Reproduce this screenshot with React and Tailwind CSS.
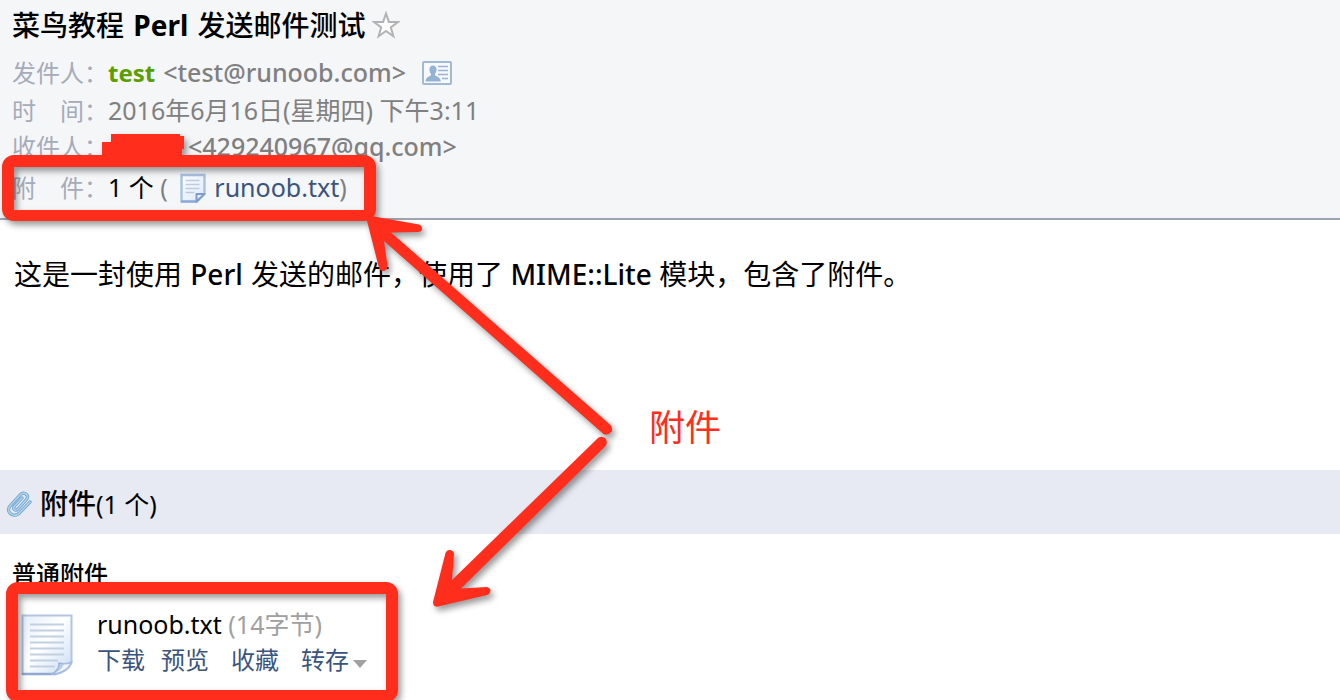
import React from "react";

function StarIcon() {
  return (
    <svg viewBox="0 0 28 28" className="size-7" aria-hidden="true">
      <path
        d="M14 2.500 16.900 10.900 26 11 18.800 16.400 21.400 25.200 14 20 6.600 25.200 9.200 16.400 2 11 11.100 10.900Z"
        fill="#fdfdfd"
        stroke="#b3b3b3"
        strokeWidth="2"
      />
    </svg>
  );
}

function CardIcon() {
  return (
    <svg viewBox="0 0 30 24" className="h-6 w-[30px]" aria-hidden="true">
      <rect x="1" y="1" width="28" height="22" rx="1" fill="#f6fafe" stroke="#a3b9d3" strokeWidth="2" />
      <path
        d="M11 4.500c2.300 0 3.700 1.700 3.600 4-.1 1.900-.8 3.300-1.600 4.200v1.600c.6.900 5.800 1.600 5.800 6.200H3.500c0-4.600 4.900-5.300 5.500-6.200v-1.600c-.9-.9-1.500-2.300-1.600-4.200-.1-2.300 1.300-4 3.600-4Z"
        fill="#94b3d4"
      />
      <path d="M16 5.500h10M16 9.500h10M16 13.500h10M20 17.500h6" stroke="#9db4cf" strokeWidth="1.600" />
    </svg>
  );
}

function SmallFileIcon() {
  return (
    <svg viewBox="0 0 26 30" className="ml-1.5 h-[30px] w-[26px]" aria-hidden="true">
      <defs>
        <linearGradient id="smallPage" x1="0" y1="0" x2="1" y2="1">
          <stop offset="0" stopColor="#ffffff" />
          <stop offset="1" stopColor="#dbe7f9" />
        </linearGradient>
      </defs>
      <path d="M1.500 2h23v18.500L17 28.500H1.500Z" fill="url(#smallPage)" stroke="#a9bfe4" strokeWidth="2.400" />
      <path d="M1 28.500h16" fill="none" stroke="#8ba6d4" strokeWidth="2" />
      <path d="M16.500 28.500V21h8Z" fill="#e8f0fc" stroke="#7f9cce" strokeWidth="2" strokeLinejoin="round" />
      <path d="M5.500 7.500h14M5.500 11.500h14M5.500 15.500h14M5.500 19.500h9" stroke="#bccbe4" strokeWidth="1.600" />
    </svg>
  );
}

function LargeFileIcon() {
  return (
    <svg viewBox="0 0 52 62" className="mt-2 h-[62px] w-[52px] shrink-0" aria-hidden="true">
      <defs>
        <linearGradient id="largePage" x1="0" y1="0" x2="1" y2="1">
          <stop offset="0" stopColor="#e4eefb" />
          <stop offset="0.45" stopColor="#ffffff" />
          <stop offset="1" stopColor="#c9dcf5" />
        </linearGradient>
      </defs>
      <path d="M1.500 1.500h49V49c-3 6-9 10-16 11h-33Z" fill="url(#largePage)" stroke="#b4c5e2" strokeWidth="2" />
      <path d="M1 60h34" stroke="#8fa9d3" strokeWidth="2.400" />
      <path d="M30 60c6-2 8-6 8-11 4 1 9 1 12.500-1-2 6-9 12-20.500 12Z" fill="#f1f6fd" stroke="#a6bcdf" strokeWidth="1.500" />
      <path d="M31 59.500c5-2 7-6 7-10.500l5 1c-2 5-6 8.500-12 9.500Z" fill="#86a4d4" opacity=".5" />
      <path
        d="M9 10.500h34M9 16.500h34M9 22.500h34M9 28.500h34M9 34.500h34M9 40.500h34M9 46.500h28M9 52.500h25"
        stroke="#c3d0df"
        strokeWidth="2"
      />
    </svg>
  );
}

function ClipIcon() {
  const d =
    "M24 13 13 24.500C7.500 29 -1 23 4 17L14.500 5.500C18.500 2 23.500 6.500 20.500 10.500L12 20C9.500 22.500 6 20 8.500 17L16 9";
  return (
    <svg viewBox="0 0 26 30" className="h-[30px] w-[26px]" aria-hidden="true">
      <g fill="none" strokeLinecap="round" strokeLinejoin="round">
        <path d={d} stroke="#6a9cc8" strokeWidth="3.200" />
        <path d={d} stroke="#aed3f1" strokeWidth="1.700" />
      </g>
    </svg>
  );
}

function Annotations() {
  return (
    <svg
      viewBox="0 0 740 704"
      className="pointer-events-none absolute left-0 top-0 h-[704px] w-[740px] drop-shadow-[3px_4px_3px_rgba(0,0,0,0.4)]"
      aria-hidden="true"
    >
      <g fill="#ff2d1c">
        <path d="M111 134H180V136H184V149H182V160H102V142H111Z" />
        <path
          fillRule="evenodd"
          d="M14 155H364a12 12 0 0 1 12 12V209a12 12 0 0 1-12 12H14a12 12 0 0 1-12-12V167a12 12 0 0 1 12-12ZM14 167V210H364V167Z"
        />
        <path
          fillRule="evenodd"
          d="M18 582H386a12 12 0 0 1 12 12V690a12 12 0 0 1-12 12H18a12 12 0 0 1-12-12V594a12 12 0 0 1 12-12ZM18 594V690H386V594Z"
        />
        <path d="M366 217Q368 215 371 216L419 224.500Q422 226 422 229Q421.500 232 418 232L391 232.500L610.500 425Q613 428 611.500 431.500Q608 436 603.500 434L384 241L387.500 266Q387.500 270 384 271Q380.500 271.500 379 268Z" />
        <path d="M598 438Q602 435.500 605.500 438.500Q608 442 605.500 446L461 588.500L487 587Q490.500 588 490.500 591Q490 594 487 595L438 606.500Q433 607.500 433 602L445.500 553Q447 549.500 450.500 550Q454 551 454 554L452 580Z" />
      </g>
    </svg>
  );
}

function MetaRow({ label, children, className = "" }) {
  return (
    <div className={`flex items-center ${className}`}>
      <dt className="w-24 shrink-0 whitespace-pre text-[#a5abb8]">{label}</dt>
      <dd className="flex items-center whitespace-pre text-[25px] text-[#808080]">{children}</dd>
    </div>
  );
}

export default function App() {
  return (
    <main className="relative min-h-screen overflow-hidden bg-white font-['Noto_Sans','Noto_Sans_CJK_SC',sans-serif] text-2xl text-black">
      <header className="border-b-2 border-[#9ea4b0] bg-[#f5f6f8] px-3 pb-[11px] pt-[3px]">
        <div className="flex h-11 items-center gap-1.5">
          <h1 className="whitespace-nowrap text-[28px] font-medium leading-10">
            菜鸟教程 <span className="px-0.5 font-bold">Perl</span> 发送邮件测试
          </h1>
          <button type="button" aria-label="星标">
            <StarIcon />
          </button>
        </div>
        <dl className="pt-0.5">
          <MetaRow label="发件人：" className="h-12">
            <span className="text-2xl font-bold text-[#5a9e00]">test</span>
            <span className="pl-2 font-medium">&lt;test@runoob.com&gt;</span>
            <button type="button" aria-label="联系人" className="ml-4">
              <CardIcon />
            </button>
          </MetaRow>
          <MetaRow label="时　间：" className="h-7">
            2016年6月16日(星期四) 下午3:11
          </MetaRow>
          <MetaRow label="收件人：" className="h-11">
            <span className="pl-20 font-medium">&lt;429240967@qq.com&gt;</span>
          </MetaRow>
          <MetaRow label="附　件：" className="h-[38px]">
            <span className="text-black">1 个</span>
            <span> ( </span>
            <SmallFileIcon />
            <a href="#attachments" className="ml-2 text-[#3a5480]">
              runoob.txt
            </a>
            <span>)</span>
          </MetaRow>
        </dl>
      </header>

      <section className="flex h-[250px] flex-col justify-between px-3.5 pb-4 pt-8">
        <p className="text-[28px] leading-11">
          这是一封使用 <span className="px-px font-medium">Perl</span> 发送的邮件，使用了{" "}
          <span className="font-medium">MIME::Lite</span> 模块，包含了附件。
        </p>
        <p className="pl-[635px] text-4xl leading-[52px] text-[#ff2d1c]">附件</p>
      </section>

      <section id="attachments">
        <div className="flex h-16 items-center gap-2 bg-[#e7eaf2] px-1.5 pt-1">
          <ClipIcon />
          <h2 className="whitespace-nowrap text-[25px]">
            <span className="text-[28px] font-medium">附件</span>(1 个)
          </h2>
        </div>
        <h3 className="px-3 pt-5 font-medium leading-10">普通附件</h3>
        <div className="flex items-start gap-6 px-[21px] pt-3">
          <LargeFileIcon />
          <div className="leading-9">
            <p className="text-[25px]">
              runoob.txt <span className="text-[#a0a0a0]">(14字节)</span>
            </p>
            <div className="flex items-center text-[#3a5480]">
              <a href="#download" className="mr-4">下载</a>
              <a href="#preview" className="mr-[22px]">预览</a>
              <a href="#favorite" className="mr-[22px]">收藏</a>
              <button type="button" className="flex items-center gap-1">
                转存
                <svg viewBox="0 0 14 8" className="mt-2 h-2 w-3.5" aria-hidden="true">
                  <path d="M0 0h14L7 8Z" fill="#a0a0a0" />
                </svg>
              </button>
            </div>
          </div>
        </div>
      </section>

      <Annotations />
    </main>
  );
}
